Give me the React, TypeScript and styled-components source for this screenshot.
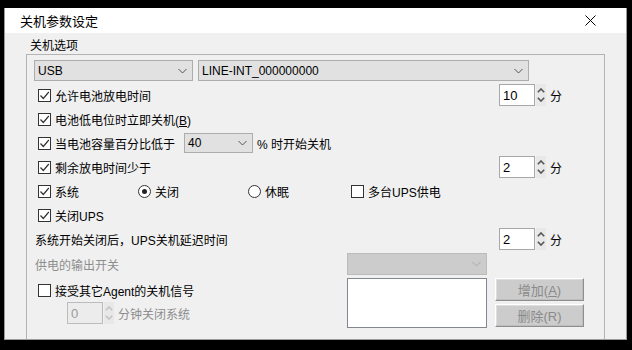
import styled, { createGlobalStyle } from "styled-components";

const GlobalStyle = createGlobalStyle`
  * { box-sizing: border-box; }
  html, body { margin: 0; padding: 0; background: #000; }
  body {
    font-family: "Liberation Sans", "Noto Sans CJK SC", sans-serif;
    font-size: 12px;
    color: #000;
  }
`;

const Window = styled.div`
  margin: 8px 0 0 4px;
  width: 623px;
  height: 332px;
  display: flex;
  flex-direction: column;
  background: #f0f0f0;
  border: 1px solid #9b9b9b;
  border-top: none;
  overflow: hidden;
`;

const TitleBar = styled.div`
  height: 25px;
  flex: none;
  background: #fff;
  display: flex;
  align-items: center;
  justify-content: space-between;
  padding: 0 30px 0 15px;
`;

const Title = styled.span`
  font-size: 13px;
`;

const Body = styled.div`
  flex: 1;
  padding: 6px 0 0 21px;
  overflow: hidden;
`;

const Legend = styled.div`
  height: 14px;
  line-height: 14px;
  margin: 0 0 1px 4px;
`;

const GroupBox = styled.div`
  width: 579px;
  height: 300px;
  border: 1px solid #b4b4b4;
  padding: 5px 0 0 7px;
`;

const ComboRow = styled.div`
  display: flex;
  gap: 5px;
  margin-bottom: 2px;
`;

const Combo = styled.div<{ $w: number; $h?: number; $disabled?: boolean; $gap?: number }>`
  width: ${(p) => p.$w}px;
  height: ${(p) => p.$h ?? 21}px;
  margin-left: ${(p) => p.$gap ?? 0}px;
  border: 1px solid ${(p) => (p.$disabled ? "#bcbcbc" : "#adadad")};
  background: ${(p) => (p.$disabled ? "#cccccc" : "#e1e1e1")};
  display: flex;
  align-items: center;
  justify-content: space-between;
  padding: 0 5px 0 3px;
  color: ${(p) => (p.$disabled ? "#8d8d8d" : "#000")};
`;

const Row = styled.div`
  height: 24px;
  display: grid;
  grid-template-columns: 465px auto;
  align-items: center;
`;

const Cell = styled.div`
  display: flex;
  align-items: center;
  min-height: 24px;
`;

const ChoiceGrid = styled.div`
  display: grid;
  grid-template-columns: 104px 110px 103px auto;
  align-items: center;
`;

const Choice = styled.label<{ $indent?: number }>`
  display: flex;
  align-items: center;
  gap: 4px;
  margin-left: ${(p) => p.$indent ?? 0}px;
  white-space: nowrap;
`;

const Box = styled.span`
  width: 13px;
  height: 13px;
  border: 1px solid #333;
  background: #fff;
  display: inline-flex;
  align-items: center;
  justify-content: center;
`;

const Radio = styled.span<{ $on?: boolean }>`
  width: 13px;
  height: 13px;
  border: 1px solid #333;
  border-radius: 50%;
  background: #fff;
  display: inline-flex;
  align-items: center;
  justify-content: center;
  &::after {
    content: "";
    width: 5px;
    height: 5px;
    border-radius: 50%;
    background: ${(p) => (p.$on ? "#222" : "transparent")};
  }
`;

const Underline = styled.span`
  text-decoration: underline;
`;

const Text = styled.span<{ $gap?: number; $muted?: boolean }>`
  margin-left: ${(p) => p.$gap ?? 0}px;
  color: ${(p) => (p.$muted ? "#8d8d8d" : "inherit")};
  white-space: nowrap;
`;

const Spin = styled.div<{ $indent?: number }>`
  display: flex;
  align-items: center;
  margin-left: ${(p) => p.$indent ?? 0}px;
`;

const SpinField = styled.div<{ $disabled?: boolean }>`
  width: 36px;
  height: 22px;
  border: 1px solid ${(p) => (p.$disabled ? "#bcbcbc" : "#a8a8a8")};
  background: ${(p) => (p.$disabled ? "#ececec" : "#fff")};
  color: ${(p) => (p.$disabled ? "#9a9a9a" : "#000")};
  display: flex;
  align-items: center;
  padding-left: 3px;
  font-size: 13px;
`;

const SpinArrows = styled.div`
  width: 10px;
  height: 22px;
  margin-left: 1px;
  background: #e8e8e8;
  display: flex;
  flex-direction: column;
  align-items: center;
  justify-content: center;
  gap: 4px;
`;

const Unit = styled.span<{ $muted?: boolean }>`
  margin-left: 4px;
  color: ${(p) => (p.$muted ? "#8d8d8d" : "#000")};
`;

const BottomGrid = styled.div`
  display: grid;
  grid-template-columns: 313px 140px auto;
  margin-top: 2px;
`;

const WideRow = styled.div`
  height: 24px;
  display: grid;
  grid-template-columns: 313px 140px;
  align-items: center;
  margin-top: 1px;
`;

const LeftStack = styled.div`
  display: flex;
  flex-direction: column;
`;

const ListBox = styled.div`
  height: 50px;
  background: #fff;
  border: 1px solid #828790;
`;

const ButtonStack = styled.div`
  display: flex;
  flex-direction: column;
  gap: 3px;
  margin-left: 8px;
`;

const Button = styled.button`
  width: 89px;
  height: 23px;
  font: inherit;
  font-size: 13px;
  color: #8a8a8a;
  background: #cccccc;
  border: 1px solid;
  border-color: #fff #8f8f8f #8f8f8f #fff;
  box-shadow: inset -1px -1px 0 #bdbdbd, inset 1px 1px 0 #dedede;
  padding: 0;
`;

const Chevron = ({ color = "#555" }: { color?: string }) => (
  <svg width="9" height="6" viewBox="0 0 9 6">
    <path d="M0.5 1 L4.5 5 L8.5 1" fill="none" stroke={color} strokeWidth="1" />
  </svg>
);

const Check = () => (
  <svg width="11" height="11" viewBox="0 0 11 11">
    <path d="M1.5 5.5 L4.3 8.5 L9.8 2" fill="none" stroke="#333" strokeWidth="1.2" />
  </svg>
);

const Arrow = ({ up, color }: { up?: boolean; color: string }) => (
  <svg width="8" height="5" viewBox="0 0 8 5">
    <path
      d={up ? "M0.8 4.2 L4 1 L7.2 4.2" : "M0.8 0.8 L4 4 L7.2 0.8"}
      fill="none"
      stroke={color}
      strokeWidth="1.6"
    />
  </svg>
);

const SpinBox = ({
  value,
  unit,
  disabled,
  indent,
}: {
  value: string;
  unit: string;
  disabled?: boolean;
  indent?: number;
}) => (
  <Spin $indent={indent}>
    <SpinField $disabled={disabled}>{value}</SpinField>
    <SpinArrows>
      <Arrow up color={disabled ? "#c4c4c4" : "#555"} />
      <Arrow color={disabled ? "#c4c4c4" : "#555"} />
    </SpinArrows>
    <Unit $muted={disabled}>{unit}</Unit>
  </Spin>
);

const CheckItem = ({
  checked,
  children,
  indent,
}: {
  checked?: boolean;
  children: React.ReactNode;
  indent?: number;
}) => (
  <Choice $indent={indent}>
    <Box>{checked && <Check />}</Box>
    <span>{children}</span>
  </Choice>
);

const App = () => (
  <>
    <GlobalStyle />
    <Window>
      <TitleBar>
        <Title>关机参数设定</Title>
        <svg width="11" height="11" viewBox="0 0 11 11">
          <path d="M0.5 0.5 L10.5 10.5 M10.5 0.5 L0.5 10.5" stroke="#000" strokeWidth="1" />
        </svg>
      </TitleBar>
      <Body>
        <Legend>关机选项</Legend>
        <GroupBox>
          <ComboRow>
            <Combo $w={159}>
              <span>USB</span>
              <Chevron />
            </Combo>
            <Combo $w={331}>
              <span>LINE-INT_000000000</span>
              <Chevron />
            </Combo>
          </ComboRow>

          <Row>
            <CheckItem checked indent={4}>允许电池放电时间</CheckItem>
            <SpinBox value="10" unit="分" />
          </Row>
          <Row>
            <CheckItem checked indent={4}>
              电池低电位时立即关机(<Underline>B</Underline>)
            </CheckItem>
          </Row>
          <Row>
            <Cell>
              <CheckItem checked indent={4}>当电池容量百分比低于</CheckItem>
              <Combo $w={69} $h={20} $gap={9}>
                <span>40</span>
                <Chevron />
              </Combo>
              <Text $gap={4}>% 时开始关机</Text>
            </Cell>
          </Row>
          <Row>
            <CheckItem checked indent={4}>剩余放电时间少于</CheckItem>
            <SpinBox value="2" unit="分" />
          </Row>
          <Row>
            <ChoiceGrid>
              <CheckItem checked indent={4}>系统</CheckItem>
              <Choice>
                <Radio $on />
                <span>关闭</span>
              </Choice>
              <Choice>
                <Radio />
                <span>休眠</span>
              </Choice>
              <CheckItem>多台UPS供电</CheckItem>
            </ChoiceGrid>
          </Row>
          <Row>
            <CheckItem checked indent={4}>关闭UPS</CheckItem>
          </Row>
          <Row>
            <Text $gap={1}>系统开始关闭后，UPS关机延迟时间</Text>
            <SpinBox value="2" unit="分" />
          </Row>
          <WideRow>
            <Text $gap={1} $muted>供电的输出开关</Text>
            <Combo $w={140} $h={22} $disabled>
              <span />
              <Chevron color="#a8a8a8" />
            </Combo>
          </WideRow>
          <BottomGrid>
            <LeftStack>
              <Cell>
                <CheckItem indent={4}>接受其它Agent的关机信号</CheckItem>
              </Cell>
              <SpinBox value="0" unit="分钟关闭系统" disabled indent={33} />
            </LeftStack>
            <ListBox />
            <ButtonStack>
              <Button disabled>
                增加(<Underline>A</Underline>)
              </Button>
              <Button disabled>删除(R)</Button>
            </ButtonStack>
          </BottomGrid>
        </GroupBox>
      </Body>
    </Window>
  </>
);

export default App;
